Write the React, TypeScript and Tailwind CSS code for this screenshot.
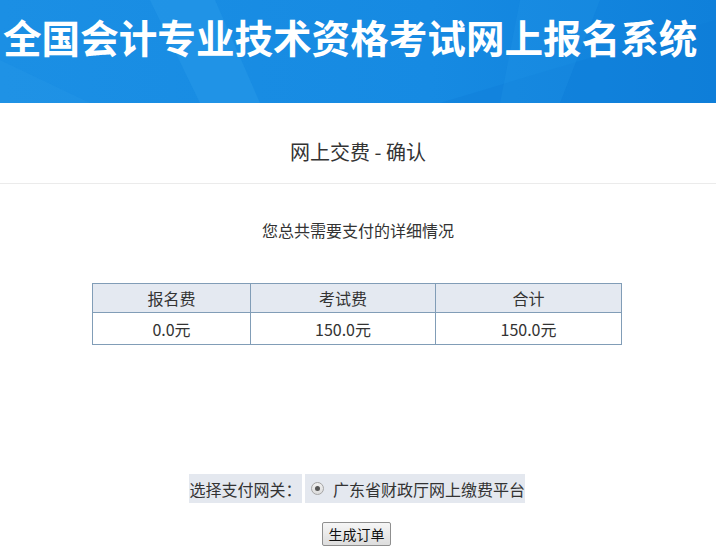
import React from "react";

const font = { fontFamily: '"Microsoft YaHei", "Noto Sans CJK SC", "Noto Sans", sans-serif' };

export default function App() {
  return (
    <div className="w-[716px] min-h-[554px] bg-white text-[#333]" style={font}>
      <div className="relative h-[103px] overflow-hidden bg-[#188ce2]">
        <svg className="absolute inset-0" width="716" height="103" viewBox="0 0 716 103" preserveAspectRatio="none">
          <defs>
            <linearGradient id="g1" x1="0" y1="0" x2="1" y2="0">
              <stop offset="0" stopColor="#1b8fe4" />
              <stop offset="0.6" stopColor="#168ae2" />
              <stop offset="1" stopColor="#0f80da" />
            </linearGradient>
          </defs>
          <rect width="716" height="103" fill="url(#g1)" />
          <polygon points="150,0 215,0 260,103 200,103" fill="#2a9ce9" opacity="0.45" />
          <polygon points="0,60 90,103 0,103" fill="#2597e6" opacity="0.4" />
          <polygon points="440,103 716,20 716,103" fill="#0d7cd6" opacity="0.35" />
          <polygon points="520,0 600,0 560,103 500,103" fill="#2396e6" opacity="0.25" />
        </svg>
        <h1 className="relative pl-[3px] pt-[12px] text-[38.6px] leading-[48px] font-bold text-white whitespace-nowrap">
          全国会计专业技术资格考试网上报名系统
        </h1>
      </div>

      <div className="border-b border-[#ebebeb] pt-[35px] pb-[17px] text-center text-[20px] leading-[28px] text-[#333]">
        网上交费 - 确认
      </div>

      <p className="mt-[34px] text-center text-[16px] leading-[24px] text-[#333]">
        您总共需要支付的详细情况
      </p>

      <div className="mt-[41px] flex justify-center">
        <table className="ml-[-2px] border-collapse text-[16px] text-[#333]">
          <thead>
            <tr className="bg-[#e4e9f1]">
              <th className="h-[29px] w-[158px] border border-[#819db7] p-0 font-normal leading-[20px]">报名费</th>
              <th className="h-[29px] w-[185px] border border-[#819db7] p-0 font-normal leading-[20px]">考试费</th>
              <th className="h-[29px] w-[186px] border border-[#819db7] p-0 font-normal leading-[20px]">合计</th>
            </tr>
          </thead>
          <tbody>
            <tr>
              <td className="h-[32px] border border-[#819db7] p-0 text-center leading-[20px]">0.0元</td>
              <td className="h-[32px] border border-[#819db7] p-0 text-center leading-[20px]">150.0元</td>
              <td className="h-[32px] border border-[#819db7] p-0 text-center leading-[20px]">150.0元</td>
            </tr>
          </tbody>
        </table>
      </div>

      <div className="mt-[129px] flex justify-center gap-[3px] pr-[2px] text-[16px] text-[#333]">
        <div className="flex h-[29px] w-[113px] items-center justify-center whitespace-nowrap bg-[#e4e8ef]">选择支付网关：</div>
        <div className="flex h-[29px] w-[220px] items-center whitespace-nowrap bg-[#e4e8ef] pl-[6px]">
          <span className="mr-[9px] flex h-[13px] w-[13px] items-center justify-center rounded-full border border-[#a5a5a5] bg-gradient-to-b from-[#f0f0f0] to-[#dcdcdc]">
            <span className="h-[5px] w-[5px] rounded-full bg-[#555]" />
          </span>
          广东省财政厅网上缴费平台
        </div>
      </div>

      <div className="mt-[19px] flex justify-center pr-[3px]">
        <button className="h-[24px] w-[69px] rounded-[2px] border border-[#8f8f8f] bg-gradient-to-b from-[#f6f6f6] to-[#dddddd] text-[14px] leading-[20px] text-[#111]">
          生成订单
        </button>
      </div>
    </div>
  );
}
